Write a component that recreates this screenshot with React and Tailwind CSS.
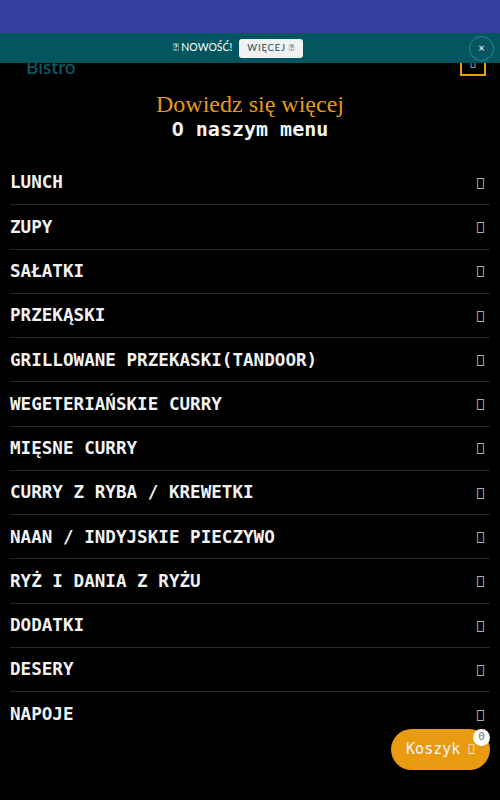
const categories = [
  "LUNCH",
  "ZUPY",
  "SAŁATKI",
  "PRZEKĄSKI",
  "GRILLOWANE PRZEKASKI(TANDOOR)",
  "WEGETERIAŃSKIE CURRY",
  "MIĘSNE CURRY",
  "CURRY Z RYBA / KREWETKI",
  "NAAN / INDYJSKIE PIECZYWO",
  "RYŻ I DANIA Z RYŻU",
  "DODATKI",
  "DESERY",
  "NAPOJE",
];

// icon font is missing on purpose, the page shows empty glyph boxes
const ICON_DOWN = "\uf107";
const ICON_BELL = "\uf0a1";
const ICON_RIGHT = "\uf105";
const ICON_BARS = "\uf0c9";
const ICON_CART = "\uf07a";

function Promo() {
  return (
    <div className="absolute left-0 right-0 top-0 z-10 flex h-[30px] items-center justify-center bg-[#02565f] pr-[24px] font-['Lato',sans-serif] text-white">
      <div className="flex items-center gap-[7px]">
        <span className="text-[10.5px]">
          {ICON_BELL} NOWOŚĆ!
        </span>
        <button className="flex h-[19px] items-center rounded-[3px] bg-[#f1f1f1] px-[8px] text-[9.5px] tracking-[0.8px] text-[#1b4a52]">
          WIĘCEJ {ICON_RIGHT}
        </button>
      </div>
      <button className="absolute right-[6px] top-[3px] flex h-[25px] w-[25px] items-center justify-center rounded-full border border-[#3f8088] text-[11px] text-white">
        ×
      </button>
    </div>
  );
}

function Header() {
  return (
    <div className="relative">
      <Promo />
      <div className="flex h-[44px] items-end justify-between px-[26px] pb-[1px] pr-[14px]">
        <span className="font-['Lato',sans-serif] text-[19px] font-semibold leading-none text-[#0d5562]">
          Bistro
        </span>
        <span className="flex h-[26px] w-[26px] items-end justify-center border-2 border-[#e59b12] pb-[4px] text-[9px] text-white">
          {ICON_BARS}
        </span>
      </div>
    </div>
  );
}

export default function App() {
  return (
    <div className="relative min-h-[800px] bg-black font-['DejaVu_Sans_Mono',monospace] text-white">
      <div className="h-[33px] bg-[#333ea0]" />
      <Header />

      <div className="mt-[14px] text-center">
        <h3 className="font-['Z003','URW_Chancery_L',serif] text-[24px] leading-[26px] text-[#e39a17]">
          Dowiedz się więcej
        </h3>
        <h2 className="text-[20px] font-bold leading-[24px] text-[#f4f4f4]">O naszym menu</h2>
      </div>

      <ul className="mt-[20px] px-[10px]">
        {categories.map((c, i) => (
          <li
            key={c}
            className={
              "flex h-[44.27px] items-center justify-between " +
              (i < categories.length - 1 ? "border-b border-[#2a2a2a]" : "")
            }
          >
            <span className="text-[17.6px] font-bold text-[#f2f2f2]">{c}</span>
            <span className="pr-[6px] text-[13px] text-[#cfcfcf]">{ICON_DOWN}</span>
          </li>
        ))}
      </ul>

      <button className="absolute left-[391px] top-[729px] flex h-[41px] w-[99px] items-center justify-center gap-[8px] rounded-full bg-[#e89a10] text-[15px] text-[#f8f8f8]">
        Koszyk <span className="text-[11px]">{ICON_CART}</span>
        <span className="absolute right-[0px] top-[0px] flex h-[17px] w-[17px] items-center justify-center rounded-full bg-white text-[11px] text-[#777]">
          0
        </span>
      </button>
    </div>
  );
}
